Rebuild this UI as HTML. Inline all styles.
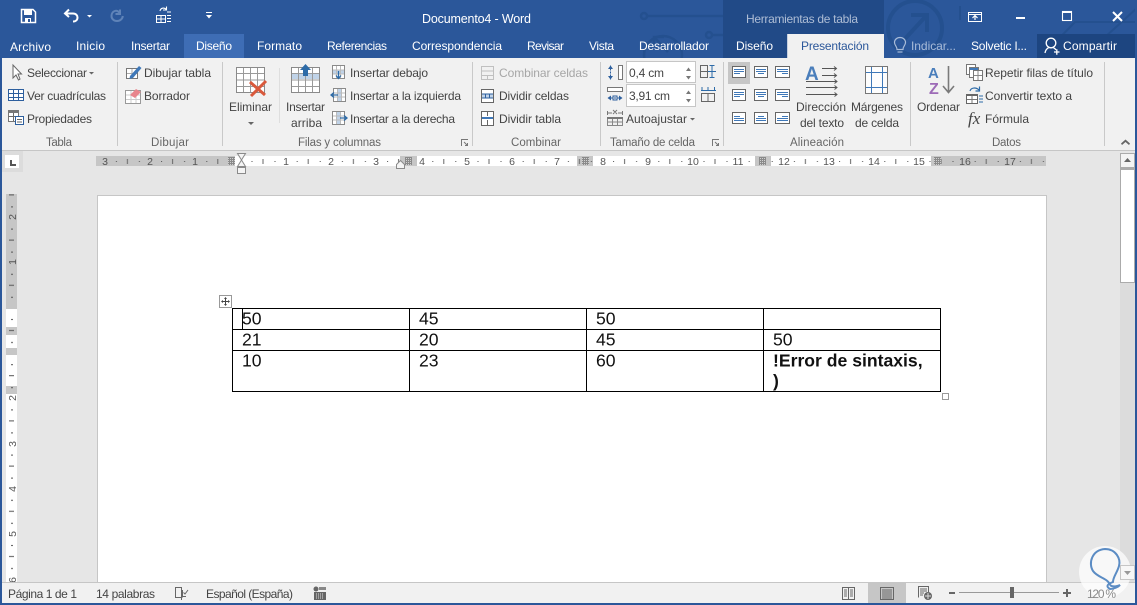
<!DOCTYPE html>
<html lang="es">
<head>
<meta charset="utf-8">
<title>Documento4 - Word</title>
<style>
html,body{margin:0;padding:0;width:1137px;height:605px;overflow:hidden;background:#e6e6e6}
svg{display:block;position:absolute;left:0;top:0}
text{font-family:"Liberation Sans",sans-serif;font-size:12px;fill:#444}
.w text{fill:#fff}
.r text{font-size:10.5px;fill:#555;text-anchor:middle}
.doc text{font-size:17.6px;fill:#111}
.s{fill:none;stroke:#6a6a6a;stroke-width:1}
.b{fill:none;stroke:#3f78b8;stroke-width:1}
.d{fill:none;stroke:#2d5f9e;stroke-width:1}
</style>
</head>
<body>
<svg width="1137" height="605" viewBox="0 0 1137 605" xmlns="http://www.w3.org/2000/svg">
<defs>
<pattern id="hticks" patternUnits="userSpaceOnUse" x="240.5" y="156" width="45.2" height="11">
<rect x="11" y="5" width="1" height="1" fill="#555"/><rect x="22" y="3" width="1" height="5" fill="#666"/><rect x="34" y="5" width="1" height="1" fill="#555"/>
</pattern>
<pattern id="vticks" patternUnits="userSpaceOnUse" x="6" y="308" width="11" height="45.2">
<rect x="5" y="11" width="2" height="1" fill="#555"/><rect x="3" y="22" width="5" height="1" fill="#555"/><rect x="5" y="34" width="2" height="1" fill="#555"/>
</pattern>
<pattern id="grid" patternUnits="userSpaceOnUse" x="0" y="0" width="2" height="2">
<rect width="2" height="2" fill="#8a8a8a"/><rect width="1" height="1" fill="#d0d0d0"/>
</pattern>
</defs>

<!-- base -->
<rect width="1137" height="605" fill="#2b579a"/>

<!-- title bar deco (painted before the ribbon so it is clipped by it) -->
<g fill="none" stroke="#24508f" stroke-width="2.5">
<path d="M647 16H723"/><circle cx="644" cy="16" r="3"/>
<path d="M712 35H723"/><circle cx="709" cy="35" r="3"/>
<circle cx="663" cy="55" r="19"/><path d="M668 52L655 38M654 46V37H664"/>
<circle cx="915" cy="28" r="27" stroke-width="4"/><path d="M903 41L926 16M911 15H927V32" stroke-width="4"/>
<path d="M1040 58L1075 22H1137M1082 58L1137 8" stroke-width="2"/>
<path d="M960 6V20" stroke-width="2"/>
</g>

<rect x="2" y="58" width="1133" height="92" fill="#f1f1f1"/>
<rect x="2" y="150" width="1133" height="1" fill="#c6c6c6"/>
<rect x="2" y="151" width="1133" height="431" fill="#e6e6e6"/>

<!-- contextual header -->
<rect x="723" y="0" width="161" height="34" fill="#214a87"/>
<rect x="723" y="34" width="64" height="24" fill="#214a87"/>
<text x="746" y="23" textLength="112" style="fill:#aebdd5">Herramientas de tabla</text>
<text x="422" y="23" textLength="109" style="fill:#fff;font-size:12.5px">Documento4 - Word</text>

<!-- tabs -->
<rect x="184" y="34" width="60" height="24" fill="#3e6db5"/>
<rect x="787" y="34" width="97" height="24" fill="#f1f1f1"/>
<rect x="787" y="34" width="1" height="24" fill="#c6d0e0"/>
<rect x="1037" y="34" width="98" height="24" fill="#1d4580"/>
<g class="w">
<text x="10" y="51" textLength="41">Archivo</text>
<text x="76" y="50" textLength="29">Inicio</text>
<text x="131" y="50" textLength="39">Insertar</text>
<text x="196" y="50" textLength="36">Diseño</text>
<text x="257" y="50" textLength="45">Formato</text>
<text x="327" y="50" textLength="60">Referencias</text>
<text x="412" y="50" textLength="90">Correspondencia</text>
<text x="527" y="50" textLength="37">Revisar</text>
<text x="589" y="50" textLength="25">Vista</text>
<text x="639" y="50" textLength="70">Desarrollador</text>
<text x="736" y="50" textLength="37">Diseño</text>
<text x="971" y="50" textLength="56">Solvetic I...</text>
<text x="1063" y="50" textLength="54">Compartir</text>
</g>
<text x="801" y="50" textLength="68" style="fill:#2b579a">Presentación</text>
<text x="911" y="50" textLength="45" style="fill:#a9bcd9">Indicar...</text>

<!-- bulb -->
<g fill="none" stroke="#a9bcd9" stroke-width="1.2">
<path d="M897 49.5C897 46 894.5 45.5 894.5 42.5C894.5 39.5 897 37.5 900 37.5C903 37.5 905.5 39.5 905.5 42.5C905.5 45.5 903 46 903 49.5Z"/>
<path d="M897.5 52H902.5"/>
</g>
<!-- person -->
<g fill="none" stroke="#fff" stroke-width="1.3">
<circle cx="1051" cy="43" r="4.8"/>
<path d="M1045 53C1045.5 50 1047 48.5 1048.5 47.8M1053.5 47.8C1054.5 48.3 1055.5 49 1056 50"/>
<path d="M1054 52H1059.5M1056.8 49.3V54.8"/>
</g>

<!-- quick access -->
<g>
<path d="M21.5 9.5H33L35.5 12V22.5H21.5Z" fill="none" stroke="#fff" stroke-width="1.5"/>
<rect x="24" y="9" width="8" height="6" fill="#fff"/>
<rect x="25" y="18" width="6" height="5" fill="#fff"/>
<rect x="28" y="19" width="2" height="3" fill="#2b579a"/>
<path d="M69 9.5L65 13.5L69 17M65.5 13.5H73C76 13.5 77.5 15.5 77.5 17.5C77.5 20 75.5 21.5 73 21.5" fill="none" stroke="#fff" stroke-width="2"/>
<path d="M87 15H92L89.5 17.5Z" fill="#fff"/>
<path d="M120 9.5V14H115.5M119.5 13C118.5 11 116.5 10.5 115.5 10.8C112.5 11.5 111.5 14 111.5 16C111.5 19 114 21 117 21C120 21 122.5 19 122.8 16" fill="none" stroke="#5f83b8" stroke-width="2"/>
<rect x="156.5" y="15.5" width="9" height="7" fill="none" stroke="#fff"/>
<path d="M156 19H166M161 15.5V22.5" stroke="#fff" stroke-width="1"/>
<path d="M167 12H171M167 15.5H171M167 18.5H171M167 21.5H171" stroke="#fff"/>
<path d="M160 11C160.5 8 164 7 166.5 9.5M166.5 6.5V10H163" fill="none" stroke="#fff" stroke-width="1.1"/>
<path d="M206 12H212V13H206ZM206 15H212L209 18.5Z" fill="#fff"/>
</g>

<!-- window buttons -->
<g fill="none" stroke="#fff">
<rect x="968.5" y="12.5" width="13" height="9"/><path d="M968 14.5H981"/>
<path d="M975 20V15.5M972.5 18L975 15.5L977.5 18" stroke-width="1.2"/>
<rect x="1016" y="17" width="9" height="2" fill="#fff" stroke="none"/>
<rect x="1062.5" y="11.5" width="9" height="9" stroke-width="1.1"/><rect x="1062" y="11" width="10" height="2" fill="#fff" stroke="none"/>
<path d="M1113 12L1122 21M1122 12L1113 21" stroke-width="2"/>
</g>

<!-- ribbon separators -->
<g fill="#c9c9c9">
<rect x="117" y="62" width="1" height="84"/><rect x="222" y="62" width="1" height="84"/><rect x="472" y="62" width="1" height="84"/>
<rect x="600" y="62" width="1" height="84"/><rect x="723" y="62" width="1" height="84"/><rect x="910" y="62" width="1" height="84"/><rect x="1104" y="62" width="1" height="84"/>
<rect x="279" y="68" width="1" height="55" fill="#dedede"/>
</g>

<!-- spin boxes -->
<rect x="626.5" y="61.5" width="69" height="21" fill="#fff" stroke="#c6c6c6"/>
<rect x="626.5" y="84.5" width="69" height="22" fill="#fff" stroke="#c6c6c6"/>

<!-- ribbon text -->
<g>
<text x="27" y="77" textLength="60">Seleccionar</text>
<text x="27" y="100" textLength="79">Ver cuadrículas</text>
<text x="27" y="123" textLength="65">Propiedades</text>
<text x="144" y="77" textLength="67">Dibujar tabla</text>
<text x="144" y="100" textLength="46">Borrador</text>
<text x="229" y="111" textLength="43">Eliminar</text>
<text x="286" y="111" textLength="39">Insertar</text>
<text x="291" y="127" textLength="31">arriba</text>
<text x="350" y="77" textLength="78">Insertar debajo</text>
<text x="350" y="100" textLength="111">Insertar a la izquierda</text>
<text x="350" y="123" textLength="105">Insertar a la derecha</text>
<text x="499" y="77" textLength="89" style="fill:#a6a6a6">Combinar celdas</text>
<text x="499" y="100" textLength="70">Dividir celdas</text>
<text x="499" y="123" textLength="62">Dividir tabla</text>
<text x="629" y="77" textLength="35">0,4 cm</text>
<text x="629" y="100" textLength="41">3,91 cm</text>
<text x="626" y="123" textLength="61">Autoajustar</text>
<text x="796" y="111" textLength="50">Dirección</text>
<text x="800" y="127" textLength="44">del texto</text>
<text x="851" y="111" textLength="52">Márgenes</text>
<text x="855" y="127" textLength="44">de celda</text>
<text x="917" y="111" textLength="43">Ordenar</text>
<text x="985" y="77" textLength="108">Repetir filas de título</text>
<text x="985" y="100" textLength="87">Convertir texto a</text>
<text x="985" y="123" textLength="44">Fórmula</text>
</g>
<g>
<text x="46" y="146" textLength="26" style="fill:#666;font-size:11.5px">Tabla</text>
<text x="151" y="146" textLength="38" style="fill:#666;font-size:11.5px">Dibujar</text>
<text x="298" y="146" textLength="83" style="fill:#666;font-size:11.5px">Filas y columnas</text>
<text x="511" y="146" textLength="50" style="fill:#666;font-size:11.5px">Combinar</text>
<text x="610" y="146" textLength="85" style="fill:#666;font-size:11.5px">Tamaño de celda</text>
<text x="790" y="146" textLength="54" style="fill:#666;font-size:11.5px">Alineación</text>
<text x="992" y="146" textLength="29" style="fill:#666;font-size:11.5px">Datos</text>
</g>

<!-- carets -->
<g fill="#666">
<path d="M89 72H94L91.5 74.5Z"/>
<path d="M248 122H254L251 125Z"/>
<path d="M690 118H695L692.5 120.5Z"/>
</g>

<!-- dialog launchers -->
<g fill="none" stroke="#777">
<path d="M461.5 146V139.5H468"/><path d="M464 142L467.5 145.5M467.5 143V145.5H465"/>
<path d="M712.5 146V139.5H719"/><path d="M715 142L718.5 145.5M718.5 143V145.5H716"/>
</g>
<!-- collapse -->
<path d="M1122 145L1121 143.5L1125.5 139.5L1130 143.5L1129 145L1125.5 142Z" fill="#666"/>

<!-- Tabla icons -->
<path d="M13 65V78L16 75L18.5 80L20 79L18 74H21.5Z" fill="#fff" stroke="#666"/>
<rect x="8.5" y="89.5" width="15" height="11" fill="#fff" stroke="#2d5f9e"/>
<path d="M8 93.5H24M8 97.5H24M13.5 90V100M18.5 90V100" class="d"/>
<rect x="8.5" y="110.5" width="10" height="11" fill="#fff" stroke="#777"/>
<rect x="8" y="110" width="11" height="3" fill="#777"/>
<path d="M8.5 116.5H18M13.5 113V121" class="s"/>
<rect x="15.5" y="116.5" width="8" height="8" fill="#fff" stroke="#2d5f9e"/>
<path d="M17 119.5H22M17 122H22" stroke="#666"/>

<!-- Dibujar icons -->
<rect x="126.5" y="68.5" width="11" height="10" fill="#fff" stroke="#777"/>
<path d="M127 73.5H137M132 69V78" stroke="#aaa"/>
<path d="M130 76L139 66L141.5 68L133 78L129.5 79Z" fill="#3f78b8"/>
<rect x="125.5" y="90.5" width="15" height="13" fill="#fff" stroke="#999"/>
<path d="M126 95H140M126 99.5H140M131 91V103M136 91V103" stroke="#ccc"/>
<path d="M130 95L136 89L141 92L135 98Z" fill="#e8858c"/>

<!-- Eliminar icon -->
<g>
<rect x="236.5" y="67.5" width="28" height="25" fill="#fff" stroke="#8a8a8a"/>
<path d="M237 73.5H264M237 80H264M237 86.5H264M243.5 68V92M250.5 68V92M257.5 68V92" stroke="#9a9a9a"/>
<path d="M250 82L265 95M266 81L251 96" stroke="#d9593c" stroke-width="3"/>
</g>
<!-- Insertar arriba -->
<g>
<rect x="291.5" y="67.5" width="28" height="25" fill="#fff" stroke="#8a8a8a"/>
<rect x="292" y="73" width="27" height="6" fill="#c0d3e8"/>
<path d="M292 73.5H319M292 80H319M292 86.5H319M298.5 68V92M305.5 68V92M312.5 68V92" stroke="#9a9a9a"/>
<path d="M305.5 64L311 70H308V76H303V70H300Z" fill="#2d6ba8"/>
</g>
<!-- Insertar small icons -->
<g>
<rect x="332.5" y="65.5" width="12" height="13" fill="#fff" stroke="#8a8a8a"/>
<rect x="333" y="70" width="11" height="4" fill="#c0d3e8"/>
<path d="M333 70H344M333 74H344M336.5 66V78M340.5 66V78" stroke="#bbb"/>
<path d="M338.5 71V78M336 75.5L338.5 78.5L341 75.5" fill="none" stroke="#2d6ba8" stroke-width="1.3"/>
<rect x="333.5" y="88.5" width="12" height="13" fill="#fff" stroke="#8a8a8a"/>
<rect x="337" y="89" width="4" height="12" fill="#c0d3e8"/>
<path d="M334 93H345M334 97H345M337.5 89V101M341.5 89V101" stroke="#bbb"/>
<path d="M338 95H331.5M334 92.5L331 95L334 97.5" fill="none" stroke="#2d6ba8" stroke-width="1.3"/>
<rect x="332.5" y="111.5" width="12" height="13" fill="#fff" stroke="#8a8a8a"/>
<rect x="337" y="112" width="4" height="12" fill="#c0d3e8"/>
<path d="M333 116H344M333 120H344M336.5 112V124M340.5 112V124" stroke="#bbb"/>
<path d="M340 118H346.5M344 115.5L347 118L344 120.5" fill="none" stroke="#2d6ba8" stroke-width="1.3"/>
</g>

<!-- Combinar icons -->
<g>
<rect x="481.5" y="66.5" width="12" height="13" fill="none" stroke="#c0c0c0"/>
<path d="M482 71H493M482 75.5H493M487.5 75.5V79" stroke="#c0c0c0"/>
<rect x="481.5" y="89.5" width="12" height="13" fill="#fff" stroke="#666"/>
<rect x="482" y="94" width="11" height="4" fill="#c0d3e8"/>
<path d="M482 94H493M482 98H493M485.5 94V98M489.5 94V98" stroke="#2d5f9e"/>
<rect x="481.5" y="111.5" width="12" height="14" fill="#fff" stroke="#666"/>
<rect x="482" y="117" width="11" height="2" fill="#3f78b8"/>
<path d="M487.5 112V116M487.5 120V125" stroke="#666"/>
</g>

<!-- cell size -->
<g>
<path d="M686 71L688.5 67.5L691 71ZM686 76H691L688.5 79.5ZM686 94L688.5 90.5L691 94ZM686 99H691L688.5 102.5Z" fill="#777"/>
<rect x="618.5" y="65.5" width="4" height="14" fill="#fff" stroke="#777"/>
<path d="M610.5 65.5V79.5" stroke="#2d5f9e" stroke-dasharray="2 1"/>
<path d="M608 69L610.5 65.5L613 69ZM608 76H613L610.5 79.5Z" fill="#2d5f9e"/>
<rect x="607.5" y="87.5" width="15" height="4" fill="#fff" stroke="#777"/>
<path d="M608 98H622" stroke="#2d5f9e" stroke-dasharray="2 1"/>
<path d="M611 95.5L607.5 98L611 100.5ZM619 95.5L622.5 98L619 100.5Z" fill="#2d5f9e"/>
<rect x="613" y="96" width="4" height="4" fill="none" stroke="#2d5f9e"/>
<path d="M607.5 111V115M622.5 111V115M608 113H612M618 113H622M613 110L617 114M617 110L613 114" stroke="#777"/>
<rect x="607" y="117" width="16" height="2" fill="#777"/>
<path d="M607.5 119V125.5M612.5 119V125.5M617.5 119V125.5M622.5 119V125.5M607 125.5H623M607 122H623" stroke="#888"/>
<rect x="700.5" y="65.5" width="7" height="12" fill="none" stroke="#666"/>
<path d="M700.5 71.5H707.5" stroke="#666"/>
<path d="M708 71.5H716M712 65V78M709.5 65.5H714.5M709.5 77.5H714.5" stroke="#2d6ba8"/>
<rect x="701.5" y="93.5" width="13" height="8" fill="none" stroke="#666"/><path d="M708 94V101" stroke="#666"/>
<path d="M701 90.5H716M702 87V91M708 87V91M714.5 87V91" stroke="#2d6ba8"/>
</g>

<!-- alignment -->
<rect x="728" y="62" width="22" height="22" fill="#c6c6c6"/>
<g>
<rect x="732.5" y="66.5" width="13" height="11" fill="#fff" stroke="#666"/><path d="M734 69.5H744M734 71.5H744M734 73.5H740" class="b"/>
<rect x="754.5" y="66.5" width="13" height="11" fill="#fff" stroke="#666"/><path d="M756 69.5H766M756 71.5H766M758 73.5H764" class="b"/>
<rect x="775.5" y="66.5" width="14" height="11" fill="#fff" stroke="#666"/><path d="M777 69.5H788M777 71.5H788M782 73.5H788" class="b"/>
<rect x="732.5" y="89.5" width="13" height="11" fill="#fff" stroke="#666"/><path d="M734 92.5H744M734 94.5H744M734 96.5H740" class="b"/>
<rect x="754.5" y="89.5" width="13" height="11" fill="#fff" stroke="#666"/><path d="M756 92.5H766M756 94.5H766M758 96.5H764" class="b"/>
<rect x="775.5" y="89.5" width="14" height="11" fill="#fff" stroke="#666"/><path d="M777 92.5H788M777 94.5H788M782 96.5H788" class="b"/>
<rect x="732.5" y="112.5" width="13" height="11" fill="#fff" stroke="#666"/><path d="M734 116.5H740M734 118.5H744M734 120.5H744" class="b"/>
<rect x="754.5" y="112.5" width="13" height="11" fill="#fff" stroke="#666"/><path d="M758 116.5H764M756 118.5H766M756 120.5H766" class="b"/>
<rect x="775.5" y="112.5" width="14" height="11" fill="#fff" stroke="#666"/><path d="M782 116.5H788M777 118.5H788M777 120.5H788" class="b"/>
</g>

<!-- Dirección del texto -->
<text x="805" y="80" style="font-size:19px;font-weight:bold;fill:#4a7ebb">A</text>
<g fill="none" stroke="#555">
<path d="M822 68.5H836M834 66.5L836.5 68.5L834 70.5"/>
<path d="M822 75.5H836M834 73.5L836.5 75.5L834 77.5"/>
<path d="M806 81.5H837M834.5 79.5L837 81.5L834.5 83.5"/>
<path d="M806 87.5H837M834.5 85.5L837 87.5L834.5 89.5"/>
<path d="M806 94.5H837M834.5 92.5L837 94.5L834.5 96.5"/>
</g>

<!-- Márgenes -->
<rect x="865.5" y="66.5" width="22" height="27" fill="#fdfdfd" stroke="#777"/>
<path d="M871.5 67V93M882.5 67V93M866 72.5H887M866 87.5H887" stroke="#3f78b8"/>

<!-- Ordenar -->
<text x="928" y="78" style="font-size:15px;font-weight:bold;fill:#4a7ebb">A</text>
<text x="929" y="94" style="font-size:16px;font-weight:bold;fill:#9d6bb7">Z</text>
<path d="M948.5 66V92M943 86L948.5 92.5L954 86" fill="none" stroke="#7a7a7a" stroke-width="1.6"/>

<!-- Datos icons -->
<g>
<rect x="966.5" y="64.5" width="9" height="10" fill="#fff" stroke="#777"/>
<rect x="969.5" y="67.5" width="9" height="10" fill="#fff" stroke="#777"/>
<rect x="973.5" y="70.5" width="9" height="10" fill="#fff" stroke="#777"/>
<rect x="970" y="68" width="8" height="2" fill="#3f78b8"/>
<path d="M974 75.5H982M978 71V80" stroke="#888"/>
<rect x="966.5" y="94.5" width="11" height="9" fill="#fff" stroke="#666"/>
<rect x="967" y="94" width="11" height="2" fill="#666"/>
<path d="M967 99.5H977M972 96V103" stroke="#777"/>
<path d="M979 96H983M979 99H983M979 102H983" stroke="#2d6ba8"/>
<path d="M970 91C971 87.5 976 87 979 90M979.5 86.5V91H975.5" fill="none" stroke="#2d6ba8" stroke-width="1.2"/>
<text x="968" y="124" style="font-family:'Liberation Serif',serif;font-style:italic;font-size:17px;fill:#444">fx</text>
</g>

<!-- tab selector -->
<rect x="1" y="151" width="22" height="21" fill="#dcdcdc"/>
<rect x="5" y="155" width="14" height="13" fill="#fff"/>
<path d="M10 160V166H16V164H12V160Z" fill="#555"/>

<!-- horizontal ruler -->
<rect x="96" y="156" width="950" height="10" fill="#fff"/>
<rect x="96" y="156" width="139" height="10" fill="#c6c6c6"/>
<rect x="400" y="156" width="17" height="10" fill="#c6c6c6"/>
<rect x="577" y="156" width="16" height="10" fill="#c6c6c6"/>
<rect x="755" y="156" width="16" height="10" fill="#c6c6c6"/>
<rect x="931" y="156" width="115" height="10" fill="#c6c6c6"/>
<rect x="96" y="156" width="950" height="10" fill="url(#hticks)"/>
<g class="r">
<text x="105" y="165">3</text><text x="150" y="165">2</text><text x="195" y="165">1</text>
<text x="286" y="165">1</text><text x="331" y="165">2</text><text x="376" y="165">3</text><text x="422" y="165">4</text>
<text x="467" y="165">5</text><text x="512" y="165">6</text><text x="557" y="165">7</text><text x="603" y="165">8</text>
<text x="648" y="165">9</text><text x="693" y="165">10</text><text x="738" y="165">11</text><text x="784" y="165">12</text>
<text x="829" y="165">13</text><text x="874" y="165">14</text><text x="919" y="165">15</text><text x="965" y="165">16</text><text x="1010" y="165">17</text>
</g>
<g fill="url(#grid)">
<rect x="228" y="157" width="7" height="8"/><rect x="405" y="157" width="7" height="8"/><rect x="582" y="157" width="7" height="8"/><rect x="759" y="157" width="7" height="8"/><rect x="934" y="157" width="7" height="8"/>
</g>
<!-- markers -->
<path d="M237.5 153.5H245.5L241.5 160L245.5 166.5H237.5L241.5 160Z" fill="#f4f4f4" stroke="#8a8a8a"/>
<rect x="237.5" y="167.5" width="8" height="6" fill="#f4f4f4" stroke="#8a8a8a"/>
<path d="M396.5 168.5V164.5L400.5 160.5L404.5 164.5V168.5Z" fill="#f4f4f4" stroke="#8a8a8a"/>

<!-- vertical ruler -->
<rect x="6" y="194" width="11" height="388" fill="#fff"/>
<rect x="6" y="194" width="11" height="115" fill="#c6c6c6"/>
<rect x="6" y="327" width="11" height="8" fill="#c6c6c6"/>
<rect x="6" y="348" width="11" height="7" fill="#c6c6c6"/>
<rect x="6" y="386" width="11" height="8" fill="#c6c6c6"/>
<rect x="6" y="194" width="11" height="388" fill="url(#vticks)"/>
<g class="r">
<text transform="translate(16 217) rotate(-90)">2</text>
<text transform="translate(16 262) rotate(-90)">1</text>
<text transform="translate(16 398) rotate(-90)">2</text>
<text transform="translate(16 444) rotate(-90)">3</text>
<text transform="translate(16 489) rotate(-90)">4</text>
<text transform="translate(16 534) rotate(-90)">5</text>
<text transform="translate(16 580) rotate(-90)">6</text>
</g>

<!-- page -->
<rect x="97.5" y="195.5" width="949" height="388" fill="#fff" stroke="#c6c6c6"/>

<!-- table -->
<g fill="none" stroke="#000">
<rect x="232.5" y="308.5" width="708" height="83"/>
<path d="M233 329.5H940M233 350.5H940M409.5 309V391M586.5 309V391M763.5 309V391"/>
</g>
<rect x="242" y="309" width="1" height="20" fill="#000"/>
<g class="doc">
<text x="242" y="324.5">50</text><text x="419" y="324.5">45</text><text x="596" y="324.5">50</text>
<text x="242" y="345.5">21</text><text x="419" y="345.5">20</text><text x="596" y="345.5">45</text><text x="773" y="345.5">50</text>
<text x="242" y="366.5">10</text><text x="419" y="366.5">23</text><text x="596" y="366.5">60</text>
<text x="773" y="366.5" style="font-weight:bold">!Error de sintaxis,</text>
<text x="773" y="387" style="font-weight:bold">)</text>
</g>
<!-- table handles -->
<rect x="219.5" y="295.5" width="12" height="12" fill="#fff" stroke="#999"/>
<path d="M225.5 297.5V305.5M221.5 301.5H229.5" stroke="#444"/>
<path d="M224 299L225.5 297L227 299ZM224 304L225.5 306L227 304ZM223 300L221 301.5L223 303ZM228 300L230 301.5L228 303Z" fill="#444"/>
<rect x="942.5" y="393.5" width="6" height="6" fill="#fff" stroke="#999"/>

<!-- scrollbar -->
<rect x="1120" y="153" width="15" height="429" fill="#dcdcdc"/>
<rect x="1120.5" y="153.5" width="14" height="14" fill="#f4f4f4" stroke="#ababab"/>
<path d="M1124 162L1127.5 158L1131 162Z" fill="#666"/>
<rect x="1120.5" y="168.5" width="14" height="114" fill="#fff" stroke="#ababab"/>
<rect x="1121" y="168" width="13" height="2" fill="#ababab"/>

<!-- status bar -->
<rect x="2" y="582" width="1133" height="21" fill="#f1f1f1"/>
<rect x="2" y="582" width="1133" height="1" fill="#c6c6c6"/>
<rect x="868" y="583" width="38" height="20" fill="#c6c6c6"/>
<text x="8" y="598" textLength="69">Página 1 de 1</text>
<text x="96" y="598" textLength="59">14 palabras</text>
<text x="206" y="598" textLength="87">Español (España)</text>

<!-- status icons -->
<g fill="none" stroke="#666">
<path d="M175.5 587.5H181.5V597.5H175.5ZM182.5 597.5V590M188 590L185 594L183.5 592.5M186 596.5H182"/>
<path d="M181.5 598V600"/>
</g>
<circle cx="316" cy="589" r="2.5" fill="#666"/>
<rect x="319" y="587" width="7" height="3" fill="#888"/>
<rect x="314" y="592" width="12" height="8" fill="#666"/>
<path d="M316 594H324M316 596H324M316 598H324" stroke="#ddd" stroke-dasharray="1 1"/>

<g fill="none" stroke="#666">
<path d="M842.5 587.5H848.5V599.5H842.5ZM848.5 587.5H854.5V599.5H848.5Z"/>
<path d="M844 590H847M844 592H847M844 594H847M844 596H847M850 590H853M850 592H853M850 594H853M850 596H853"/>
<rect x="880.5" y="587.5" width="13" height="12"/>
<path d="M882 590H892M882 592H892M882 594H892M882 596H892M882 598H892"/>
<path d="M918.5 597.5V586.5H928.5V592M920 589H927M920 591H927M920 593H924M920 595H923"/>
</g>
<circle cx="928" cy="596" r="4" fill="#666"/>
<path d="M925 596H931M928 593V599" stroke="#ddd"/>
<rect x="949" y="592" width="6" height="2" fill="#666"/>
<rect x="959" y="592" width="100" height="1" fill="#999"/>
<rect x="1010" y="587" width="4" height="11" fill="#666"/>
<path d="M1063 593H1071M1067 589V597" stroke="#666" stroke-width="2"/>

<!-- watermark -->
<circle cx="1105" cy="572" r="26" fill="#fff" fill-opacity=".72"/>
<text x="1087" y="598" textLength="29" style="fill:#8a8a8a">120 %</text>
<path d="M1110 585C1108 578 1098 578 1093 571C1088 563 1092 550 1105 549C1116 549 1121 559 1119 566C1117 573 1113 577 1113 582C1108 584 1105 586 1110 589C1114 589 1118 587 1120 585C1115 587 1112 587 1110 585" fill="none" stroke="#5b8cc4" stroke-width="2"/>
<rect x="1120.5" y="565.5" width="14" height="14" fill="#f7f7f7" stroke="#c6c6c6"/>
<path d="M1124 571H1131L1127.5 575Z" fill="#999"/>

<!-- window edge -->
<rect x="0" y="0" width="2" height="605" fill="#2b579a"/>
<rect x="1135" y="0" width="2" height="605" fill="#2b579a"/>
<rect x="0" y="603" width="1137" height="2" fill="#2b579a"/>
</svg>
</body>
</html>
